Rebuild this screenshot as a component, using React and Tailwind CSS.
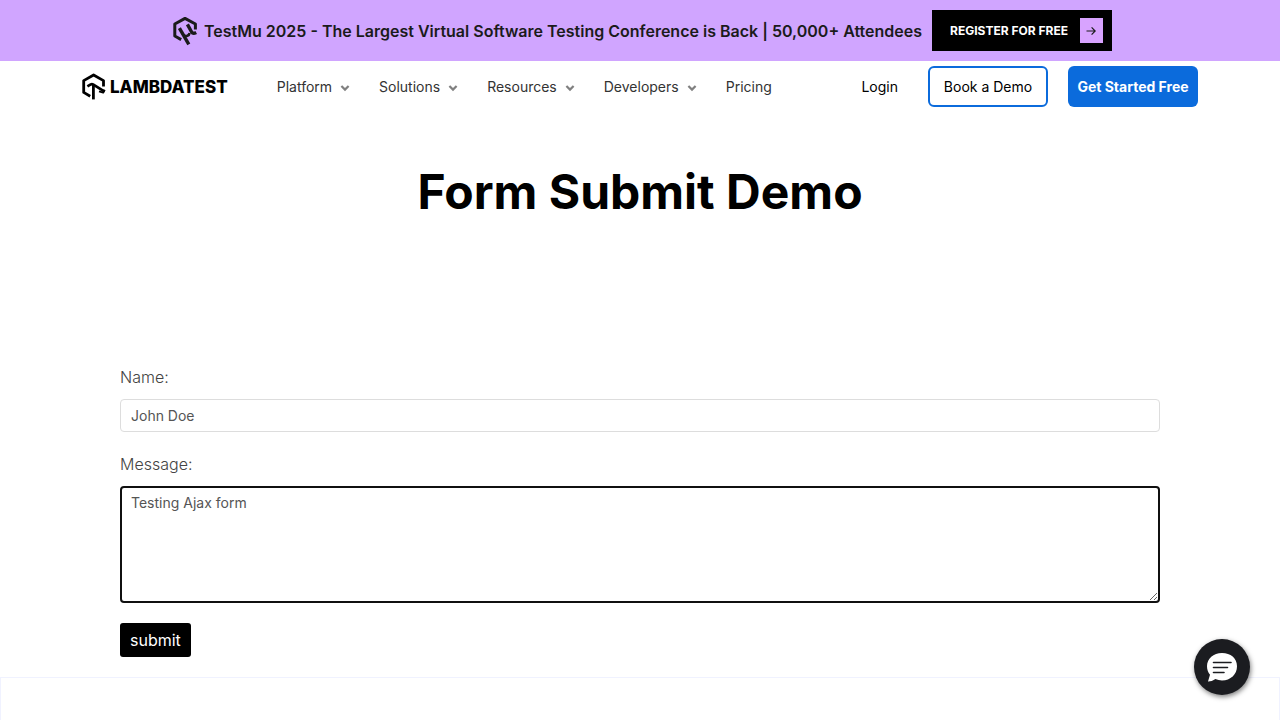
import React from "react";

const menus = ["Platform", "Solutions", "Resources", "Developers"];

function TestMuIcon() {
  return (
    <svg width="26" height="30" viewBox="0 0 26 30" fill="none" stroke="#1b1b1b" strokeLinecap="butt" strokeLinejoin="round" aria-hidden="true">
      <path d="M9.2 23.6 2.8 20V8L13 2.400 23.400 8v5.600" strokeWidth="3" />
      <path d="M7.400 12.200 16.800 28.400" strokeWidth="3.4" />
      <path d="M11.600 19.400c2.600 1.400 5.600.2 6-2.400" strokeWidth="2.600" />
      <path d="M15.400 8.400l4.200 7.600c.8 1.400 2.400 1.800 4.600.6" strokeWidth="3.4" />
    </svg>
  );
}

function LambdaLogo() {
  return (
    <svg width="24" height="27" viewBox="0 0 24 27" fill="none" stroke="#000" strokeWidth="2.8" strokeLinejoin="round" aria-hidden="true">
      <path d="M8.2 23.2 1.700 19.400V7.600L11.600 2l9.900 5.600v5.800" />
      <path d="M5.400 13.400l3.400-2c.8-.4 1.400-.4 2.200 0L22.600 18.600" />
      <path d="M11.400 12V26.400" />
      <path d="M17 18.400l4.200 1.200 1.400-2.800" strokeWidth="2" />
    </svg>
  );
}

function Chevron() {
  return (
    <svg width="10" height="8" viewBox="0 0 10 8" fill="none" stroke="#808080" strokeWidth="2.2" className="mt-[2px]" aria-hidden="true">
      <path d="M1.400 2 5 5.600l3.600-3.600" />
    </svg>
  );
}

function Banner() {
  return (
    <div className="flex items-center justify-center bg-[#d0a5ff] py-[10px] pl-1">
      <TestMuIcon />
      <p className="ml-[6px] text-base font-semibold text-[#1b1b1b]">
        TestMu 2025 - The Largest Virtual Software Testing Conference is Back | 50,000+ Attendees
      </p>
      <a href="#register" className="ml-[10px] flex h-[41px] items-center gap-3 bg-black pr-[9px] pl-[18px] text-xs font-bold text-white">
        REGISTER FOR FREE
        <span className="flex h-[25px] w-[23px] items-center justify-center bg-[#d8a3ff]">
          <svg width="10" height="10" viewBox="0 0 10 10" fill="none" stroke="#1b1b1b" strokeWidth="1.2" aria-hidden="true">
            <path d="M.5 5h8.6M5.6 1.4 9.2 5 5.6 8.6" />
          </svg>
        </span>
      </a>
    </div>
  );
}

function Header() {
  return (
    <header className="mx-auto flex w-full max-w-[1116px] items-center py-[5px] text-sm text-[#333333]">
      <a href="#home" aria-label="LambdaTest" className="flex items-center gap-1 text-black">
        <LambdaLogo />
        <span className="text-[17px] leading-6 font-extrabold">LAMBDATEST</span>
      </a>
      <nav className="ml-[49px] flex items-center gap-[29px]">
        {menus.map((name) => (
          <button key={name} type="button" className="flex items-center gap-2">
            {name}
            <Chevron />
          </button>
        ))}
        <a href="#pricing">Pricing</a>
      </nav>
      <div className="ml-auto flex items-center text-black">
        <a href="#login">Login</a>
        <a href="#demo" className="ml-[30px] flex h-[41px] w-[120px] items-center justify-center rounded-md border-2 border-[#0b6bdc]">
          Book a Demo
        </a>
        <a href="#start" className="ml-5 flex h-[41px] w-[130px] items-center justify-center rounded-md bg-[#0b6bdc] font-bold text-white">
          Get Started Free
        </a>
      </div>
    </header>
  );
}

function DemoForm() {
  return (
    <form className="px-[120px] pt-[143px] pb-5 text-[#444444]" onSubmit={(e) => e.preventDefault()}>
      <label htmlFor="name" className="block text-base font-light">Name:</label>
      <input
        id="name"
        type="text"
        defaultValue="John Doe"
        className="mt-[10px] block h-[33px] w-full rounded border border-[#dddddd] px-[10px] text-sm text-[#555555] outline-none"
      />
      <label htmlFor="message" className="mt-5 block text-base font-light">Message:</label>
      <textarea
        id="message"
        defaultValue="Testing Ajax form"
        className="mt-[10px] block h-[117px] w-full rounded border-2 border-[#101010] px-[9px] py-[5px] text-sm text-[#555555] outline-none"
      />
      <button type="submit" className="mt-5 block h-[34px] rounded-[3px] bg-black px-[10px] text-base text-white">
        submit
      </button>
    </form>
  );
}

export default function App() {
  return (
    <div className="flex min-h-screen flex-col bg-white font-['Inter',sans-serif]">
      <Banner />
      <Header />
      <main className="flex grow flex-col">
        <h1 className="pt-[50px] text-center text-5xl leading-[60px] font-bold text-black">Form Submit Demo</h1>
        <DemoForm />
        <section aria-label="More" className="grow border border-b-0 border-[#f0f2ff]" />
      </main>
      <button
        type="button"
        aria-label="Open chat"
        className="fixed right-[30px] bottom-[25px] flex size-14 items-center justify-center rounded-full bg-[#1b1c20] shadow-[1px_2px_5px_rgba(0,0,0,0.5)]"
      >
        <svg width="30" height="30" viewBox="0 0 30 30" aria-hidden="true">
          <path d="M15 1C6.4 1 0 6.6 0 14.2c0 3.6 1.2 6.4 3 8.6L1 29.4c1.200.2 5-.4 7.400-2.400 2 .8 4.400 1.400 6.600 1.400 8.600 0 15-6 15-14.200S23.600 1 15 1z" fill="#fff" />
          <path d="M6.500 10.500h17.500M6.500 15.500h14M6.500 20.500h10.500" stroke="#1b1c20" strokeWidth="1.600" strokeLinecap="round" />
        </svg>
      </button>
    </div>
  );
}
